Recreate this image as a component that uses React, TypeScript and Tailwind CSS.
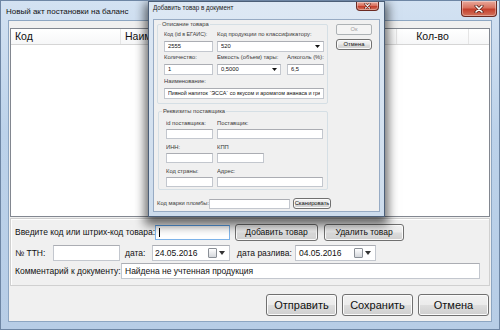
import React from 'react';

const btn =
  'flex items-center justify-center rounded-[3px] border border-[#707070] bg-[linear-gradient(#f2f2f2_0%,#ebebeb_48%,#dddddd_52%,#cfcfcf_100%)] shadow-[inset_0_0_0_1px_#fbfbfb] text-[#111]';

const box = 'bg-white border border-[#c3c7ce] border-t-[#abadb3]';

const CloseButton: React.FC<{ className: string; small?: boolean }> = ({ className, small }) => (
  <div
    className={`absolute top-0 flex items-center justify-center rounded-b-[4px] border border-t-0 border-[#6b2a22] bg-[linear-gradient(#e9a99c_0%,#d9725f_45%,#c4402d_55%,#d2735c_100%)] shadow-[inset_0_0_0_1px_rgba(255,255,255,0.35)] ${className}`}
  >
    <svg width={small ? 7 : 10} height={small ? 6 : 8} viewBox="0 0 10 8">
      <path d="M2 1 L8 7 M8 1 L2 7" stroke="#4a1a14" strokeWidth="3" strokeLinecap="round" />
      <path d="M2 1 L8 7 M8 1 L2 7" stroke="#fff" strokeWidth="1.6" strokeLinecap="round" />
    </svg>
  </div>
);

const Arrow: React.FC = () => (
  <svg width="5" height="3" viewBox="0 0 5 3" className="shrink-0">
    <path d="M0 0 H5 L2.5 3 Z" fill="#111" />
  </svg>
);

const CalendarIcon: React.FC = () => (
  <div className="flex items-center gap-[2px] mr-[4px]">
    <div className="w-[9px] h-[10px] rounded-[1px] border border-[#8a8f96] bg-[linear-gradient(#ffffff,#d4d7db)]" />
    <svg width="6" height="4" viewBox="0 0 6 4">
      <path d="M0 0 H6 L3 4 Z" fill="#333" />
    </svg>
  </div>
);

const DLabel: React.FC<{ children: React.ReactNode; w?: string; h?: string; extra?: string }> = ({ children, w = '', h = 'h-[10px]', extra = '' }) => (
  <div className={`${h} ${w} ${extra} leading-[7px] text-[#3a3a3a] whitespace-nowrap overflow-hidden`}>{children}</div>
);

const DField: React.FC<{ value?: string; w: string; h?: string; combo?: boolean; extra?: string }> = ({ value = '', w, h = 'h-[11px]', combo, extra = '' }) => (
  <div className={`${box} ${w} ${h} flex items-center pl-[3px] pr-[3px] overflow-hidden whitespace-nowrap text-[#111]`}>
    <span className={`flex-1 overflow-hidden ${extra}`}>{value}</span>
    {combo && <Arrow />}
  </div>
);

const Group: React.FC<{ title: string; className: string; children: React.ReactNode }> = ({ title, className, children }) => (
  <div className={`relative border border-[#d5dfe5] rounded-[2px] ${className}`}>
    <div className="absolute -top-[4px] left-[3px] px-[1px] bg-[#f0f0f0] leading-[7px] text-[#3a3a3a]">{title}</div>
    {children}
  </div>
);

const Dialog: React.FC = () => (
  <div className="absolute left-[147px] top-0 w-[237px] h-[216px] border border-[#4c5f78] bg-[linear-gradient(#dde8f4,#cddcec)] shadow-[0_5px_10px_3px_rgba(0,0,0,0.6)] text-[5.8px]">
    <div className="h-[17px] pl-[4px] leading-[12px] text-[6.3px] text-[#1a1a1a]">Добавить товар в документ</div>
    <CloseButton className="right-[5px] w-[23px] h-[9px]" small />
    <div className="mx-[4px] h-[193px] bg-[#f0f0f0] border border-[#97abc4] pl-[3px] pt-[4px] flex flex-col">
      <div className="flex">
        <div className="w-[171px] flex flex-col">
          <Group title="Описание товара" className="h-[80px]">
            <div className="pl-[6px] pt-[6px] flex flex-col gap-[2.3px]">
              <div className="flex gap-[4px]">
                <div>
                  <DLabel w="w-[49px]" extra="text-[5.4px]">Код (id в ЕГАИС):</DLabel>
                  <DField value="2555" w="w-[49px]" />
                </div>
                <div>
                  <DLabel w="w-[107px]">Код продукции по классификатору:</DLabel>
                  <DField value="520" w="w-[107px]" combo />
                </div>
              </div>
              <div className="flex gap-[4px]">
                <div>
                  <DLabel w="w-[49px]">Количество:</DLabel>
                  <DField value="1" w="w-[49px]" />
                </div>
                <div>
                  <DLabel w="w-[64px]">Емкость (объем) тары:</DLabel>
                  <DField value="0,5000" w="w-[64px]" combo />
                </div>
                <div className="ml-[2px]">
                  <DLabel w="w-[37px]">Алкоголь (%):</DLabel>
                  <DField value="6,5" w="w-[37px]" />
                </div>
              </div>
              <div>
                <DLabel>Наименование:</DLabel>
                <DField value="Пивной напиток `ЭССА` со вкусом и ароматом ананаса и гре" w="w-[160px]" extra="text-[5.4px]" />
              </div>
            </div>
          </Group>
          <Group title="Реквизиты поставщика" className="mt-[7px] h-[79px] ml-[1px]">
            <div className="pl-[7px] pt-[8px] flex flex-col gap-[5px]">
              <div className="flex gap-[4px]">
                <div>
                  <DLabel w="w-[47px]" h="h-[9px]">id поставщика:</DLabel>
                  <DField w="w-[47px]" h="h-[10px]" />
                </div>
                <div>
                  <DLabel w="w-[106px]" h="h-[9px]">Поставщик:</DLabel>
                  <DField w="w-[106px]" h="h-[10px]" />
                </div>
              </div>
              <div className="flex gap-[4px]">
                <div>
                  <DLabel w="w-[47px]" h="h-[9px]">ИНН:</DLabel>
                  <DField w="w-[47px]" h="h-[10px]" />
                </div>
                <div>
                  <DLabel w="w-[47px]" h="h-[9px]">КПП</DLabel>
                  <DField w="w-[47px]" h="h-[10px]" />
                </div>
              </div>
              <div className="flex gap-[4px]">
                <div>
                  <DLabel w="w-[47px]" h="h-[9px]">Код страны:</DLabel>
                  <DField w="w-[47px]" h="h-[10px]" />
                </div>
                <div>
                  <DLabel w="w-[106px]" h="h-[9px]">Адрес:</DLabel>
                  <DField w="w-[106px]" h="h-[10px]" />
                </div>
              </div>
            </div>
          </Group>
        </div>
        <div className="ml-[8px] flex flex-col gap-[4px]">
          <div className="w-[36px] h-[11px] flex items-center justify-center rounded-[2px] border border-[#adb2b5] bg-[#f4f4f4] text-[#a3a3a3]">Ок</div>
          <div className={`${btn} w-[36px] h-[11px] rounded-[2px] border-[#3c7fb1] shadow-[inset_0_0_0_1px_#9fdcf9]`}>Отмена</div>
        </div>
      </div>
      <div className="mt-[8px] flex items-center">
        <div className="w-[52px] whitespace-nowrap text-[#3a3a3a]">Код марки пломбы:</div>
        <DField w="w-[81px]" h="h-[10px]" />
        <div className={`${btn} ml-[3px] w-[38px] h-[11px] rounded-[2px]`}>Сканировать</div>
      </div>
    </div>
  </div>
);

export default function App() {
  return (
    <div className="relative w-[500px] h-[330px] overflow-hidden border border-[#6e86a4] bg-[linear-gradient(#d3e2f2,#bcd2ea_40%,#b7cde6)] font-['Liberation_Sans',Arial,sans-serif] text-[#111]">
      <div className="h-[19px] pl-[5px] pt-[2px] flex items-center text-[8px] text-[#111]">Новый акт постановки на баланс</div>
      <CloseButton className="right-[2px] w-[36px] h-[16px]" />

      <div className="mx-[7px] h-[302px] bg-[#f0f0f0] border border-[#8da6c2] flex flex-col">
        {/* список товаров */}
        <div className="mt-[7px] mx-[1px] h-[189px] bg-white border border-[#828790]">
          <div className="h-[16px] flex items-center text-[10.5px] border-b border-[#d5d5d5] bg-[linear-gradient(#ffffff,#f6f7f8)]">
            <div className="w-[110px] pl-[4px] border-r border-[#e5e5e5] h-full flex items-center">Код</div>
            <div className="w-[276px] pl-[4px] border-r border-[#e5e5e5] h-full flex items-center">Наименование</div>
            <div className="w-[72px] border-r border-[#e5e5e5] h-full flex items-center justify-center">Кол-во</div>
            <div className="flex-1" />
          </div>
        </div>

        {/* панель ввода */}
        <div className="mt-[1px] mx-[1px] h-[68px] border border-[#d0d0d0] shadow-[inset_1px_1px_0_#fff] text-[8.5px] pl-[4px] pt-[5px] flex flex-col">
          <div className="h-[17px] flex items-center">
            <div className="w-[140px] whitespace-nowrap">Введите код или штрих-код товара:</div>
            <div className="w-[75px] h-[15px] bg-white border border-[#7eb4ea] border-t-[#569de5] flex items-center pl-[3px]">
              <div className="w-[1px] h-[9px] bg-black" />
            </div>
            <div className={`${btn} ml-[5px] w-[83px] h-[17px]`}>Добавить товар</div>
            <div className={`${btn} ml-[6px] w-[80px] h-[17px]`}>Удалить товар</div>
          </div>
          <div className="mt-[4px] h-[16px] flex items-center">
            <div className="w-[38px] whitespace-nowrap">№ ТТН:</div>
            <div className={`${box} w-[67px] h-[16px]`} />
            <div className="ml-[5px] w-[27px]">дата:</div>
            <div className={`${box} w-[78px] h-[16px] flex items-center pl-[2px]`}>
              <span className="flex-1">24.05.2016</span>
              <CalendarIcon />
            </div>
            <div className="ml-[7px] w-[58px] whitespace-nowrap">дата разлива:</div>
            <div className={`${box} w-[81px] h-[16px] flex items-center pl-[3px]`}>
              <span className="flex-1">04.05.2016</span>
              <CalendarIcon />
            </div>
          </div>
          <div className="mt-[2px] h-[16px] flex items-center">
            <div className="w-[106px] whitespace-nowrap">Комментарий к документу:</div>
            <div className={`${box} w-[359px] h-[16px] flex items-center pl-[3px]`}>Найдена не учтенная продукция</div>
          </div>
        </div>

        {/* кнопки */}
        <div className="mt-[8px] flex justify-end gap-[5px] pr-[2px] text-[11px]">
          <div className={`${btn} w-[71px] h-[22px]`}>Отправить</div>
          <div className={`${btn} w-[71px] h-[22px]`}>Сохранить</div>
          <div className={`${btn} w-[71px] h-[22px]`}>Отмена</div>
        </div>
      </div>

      <Dialog />
    </div>
  );
}
